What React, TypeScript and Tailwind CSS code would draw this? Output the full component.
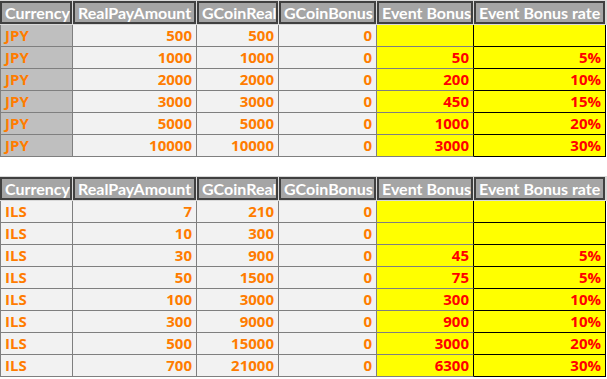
const cols = "grid grid-cols-[73px_124px_82px_98px_97px_132px]";

const headers = ["Currency", "RealPayAmount", "GCoinReal", "GCoinBonus", "Event Bonus", "Event Bonus rate"];

type Row = [string, string, string, string, string, string];

const jpy: Row[] = [
  ["JPY", "500", "500", "0", "", ""],
  ["JPY", "1000", "1000", "0", "50", "5%"],
  ["JPY", "2000", "2000", "0", "200", "10%"],
  ["JPY", "3000", "3000", "0", "450", "15%"],
  ["JPY", "5000", "5000", "0", "1000", "20%"],
  ["JPY", "10000", "10000", "0", "3000", "30%"],
];

const ils: Row[] = [
  ["ILS", "7", "210", "0", "", ""],
  ["ILS", "10", "300", "0", "", ""],
  ["ILS", "30", "900", "0", "45", "5%"],
  ["ILS", "50", "1500", "0", "75", "5%"],
  ["ILS", "100", "3000", "0", "300", "10%"],
  ["ILS", "300", "9000", "0", "900", "10%"],
  ["ILS", "500", "15000", "0", "3000", "20%"],
  ["ILS", "700", "21000", "0", "6300", "30%"],
];

function Header() {
  return (
    <div className={`${cols} h-[25px] bg-[#d9d9d9]`}>
      {headers.map((h) => (
        <div
          key={h}
          className="mt-px mr-px mb-px flex items-center overflow-hidden whitespace-nowrap border-2 border-[#404040] bg-[#a5a5a5] pl-[3px] pt-[1px] font-['Lato',sans-serif] text-[16px] font-bold leading-none text-white"
        >
          {h}
        </div>
      ))}
    </div>
  );
}

function Table({ rows, grayCurrency }: { rows: Row[]; grayCurrency: boolean }) {
  return (
    <div className="w-[607px]">
      <Header />
      {rows.map((r, i) => (
        <div key={i} className={`${cols} h-[22px] text-[15px] font-bold leading-none`}>
          <div
            className={`flex items-center border-l border-b border-r border-[#7f7f7f] pl-[4px] text-[#ff7c00] ${
              grayCurrency ? "bg-[#bfbfbf]" : "bg-[#f2f2f2]"
            }`}
          >
            {r[0]}
          </div>
          {[r[1], r[2], r[3]].map((v, j) => (
            <div
              key={j}
              className="flex items-center justify-end border-b border-r border-[#7f7f7f] bg-[#f2f2f2] pr-[4px] text-[#ff7c00]"
            >
              {v}
            </div>
          ))}
          <div className="flex items-center justify-end border-b border-r border-b-[#7f7f7f] border-r-black bg-[#ffff00] pr-[4px] text-[#ff0000]">
            {r[4]}
          </div>
          <div className="flex items-center justify-end border-b border-r border-black bg-[#ffff00] pr-[4px] text-[#ff0000]">
            {r[5]}
          </div>
        </div>
      ))}
    </div>
  );
}

export default function App() {
  return (
    <div className="flex h-[379px] w-[607px] flex-col overflow-hidden bg-white font-['Open_Sans',sans-serif]">
      <Table rows={jpy} grayCurrency />
      <div className="h-[19px]" />
      <Table rows={ils} grayCurrency={false} />
    </div>
  );
}
